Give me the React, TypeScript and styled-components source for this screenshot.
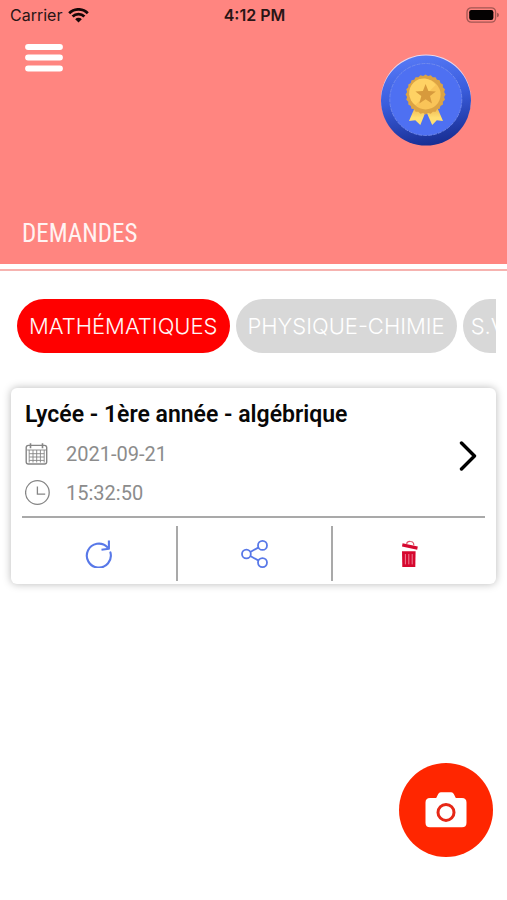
import React, { useState } from 'react';
import styled, { createGlobalStyle } from 'styled-components';

const GlobalStyle = createGlobalStyle`
  *, *::before, *::after { box-sizing: border-box; }
  body { margin: 0; background: #fff; font-family: Inter, "Liberation Sans", sans-serif; }
  button { margin: 0; padding: 0; border: 0; background: none; font: inherit; color: inherit; cursor: pointer; }
  svg { display: block; }
`;

const Screen = styled.div`
  min-height: 100vh;
  background: #fff;
`;

const Header = styled.header`
  background: #ff8580;
`;

const StatusBar = styled.div`
  display: grid;
  grid-template-columns: 1fr auto 1fr;
  align-items: center;
  height: 30px;
  padding: 0 8px 0 10px;
  font-size: 16px;
  line-height: 20px;
  color: #291515;
`;

const Carrier = styled.div`
  display: flex;
  align-items: center;
  gap: 6px;
`;

const Clock = styled.time`
  font-weight: 600;
`;

const BatterySlot = styled.div`
  display: flex;
  justify-content: flex-end;
`;

const TopBar = styled.div`
  display: flex;
  justify-content: space-between;
  align-items: flex-start;
  padding: 13px 36px 0 25px;
`;

const MedalButton = styled.button`
  margin-top: 11px;
`;

const PageTitle = styled.h1`
  margin: 0;
  padding: 72px 22px 14px;
  font-family: "Roboto Condensed", "Liberation Sans Narrow", Roboto, sans-serif;
  font-size: 25px;
  line-height: 32px;
  font-weight: 400;
  color: #fff3f2;
`;

const HeaderRule = styled.div`
  height: 7px;
  border-bottom: 2px solid #f6b3b0;
  background: #fff;
`;

const Content = styled.main`
  padding: 28px 11px 0;
`;

const Subjects = styled.nav`
  display: flex;
  gap: 6px;
  padding-left: 6px;
  overflow: hidden;
`;

const Chip = styled.button<{ $active: boolean; $compact: boolean }>`
  flex: none;
  height: 54px;
  padding: 0 ${({ $compact }) => ($compact ? 8 : 12)}px;
  border-radius: 27px;
  background: ${({ $active }) => ($active ? '#ff0000' : '#d8d8d8')};
  color: ${({ $active }) => ($active ? '#fff6f6' : '#ffffff')};
  font-size: 22px;
  font-weight: 300;
  line-height: 28px;
  white-space: nowrap;
`;

const Card = styled.article`
  margin-top: 35px;
  padding: 0 11px;
  border-radius: 6px;
  background: #fff;
  box-shadow: 0 0 9px rgba(0, 0, 0, 0.28);
`;

const Summary = styled.div`
  display: flex;
  align-items: center;
  justify-content: space-between;
  padding: 12px 8px 4px 3px;
`;

const CardTitle = styled.h2`
  margin: 0 0 4px;
  font-family: Roboto, sans-serif;
  font-size: 23px;
  line-height: 30px;
  font-weight: 600;
  color: #080808;
`;

const Detail = styled.div`
  display: grid;
  grid-template-columns: 25px auto;
  column-gap: 16px;
  align-items: center;
  height: 39px;
  font-family: Roboto, sans-serif;
  font-size: 20px;
  line-height: 26px;
  color: #8c8c8c;
`;

const Actions = styled.div`
  display: grid;
  grid-template-columns: repeat(3, 1fr);
  padding: 8px 0 3px;
  border-top: 2px solid #a9a9a9;
`;

const Action = styled.button`
  display: flex;
  align-items: center;
  justify-content: center;
  height: 55px;

  & + & {
    border-left: 2px solid #a9a9a9;
  }
`;

const CameraButton = styled.button`
  position: fixed;
  right: 14px;
  bottom: 43px;
  display: flex;
  align-items: center;
  justify-content: center;
  width: 94px;
  height: 94px;
  border-radius: 50%;
  background: #ff2600;
`;

const WifiIcon = () => (
  <svg width="21" height="15" viewBox="0 0 21 15" aria-hidden="true">
    <g fill="none" stroke="#160707" strokeWidth="2.8">
      <path d="M1.2 5.2a13.2 13.2 0 0 1 18.6 0" />
      <path d="M4.6 8.6a8.4 8.4 0 0 1 11.8 0" />
    </g>
    <path d="M7.2 11.2a4.7 4.7 0 0 1 6.6 0L10.5 14.5z" fill="#160707" />
  </svg>
);

const BatteryIcon = () => (
  <svg width="33" height="16" viewBox="0 0 33 16" role="img" aria-label="Batterie pleine">
    <rect x="1" y="0.8" width="28.6" height="14.4" rx="4.2" fill="none" stroke="#a35652" strokeWidth="1.3" />
    <rect x="3.2" y="3" width="24.2" height="10" rx="2.2" fill="#050202" />
    <path d="M31 5.8q2 .5 2 2.2t-2 2.2z" fill="#a35652" />
  </svg>
);

const MenuIcon = () => (
  <svg width="38" height="29" viewBox="0 0 38 29" aria-hidden="true">
    <path d="M3.1 4h31.8M3.1 14.6h31.8M3.1 25.4h31.8" stroke="#fff" strokeWidth="6" strokeLinecap="round" />
  </svg>
);

const sealPoints = Array.from({ length: 48 }, (_, i) => {
  const angle = (i * Math.PI) / 24;
  const radius = i % 2 ? 18.7 : 20;
  return `${(44.6 + radius * Math.cos(angle)).toFixed(2)},${(40.5 + radius * Math.sin(angle)).toFixed(2)}`;
}).join(' ');

const MedalIcon = () => (
  <svg width="90" height="92" viewBox="0 0 90 92" aria-hidden="true">
    <defs>
      <linearGradient id="rim" x1="0.4" y1="0" x2="0.6" y2="1">
        <stop offset="0" stopColor="#5578f5" />
        <stop offset="0.45" stopColor="#3b5ede" />
        <stop offset="1" stopColor="#172d91" />
      </linearGradient>
      <linearGradient id="ribbon" x1="0" y1="0" x2="0" y2="1">
        <stop offset="0" stopColor="#edb54d" />
        <stop offset="0.6" stopColor="#ffdf73" />
      </linearGradient>
    </defs>
    <circle cx="45" cy="45.4" r="45" fill="#ead9ed" />
    <circle cx="45" cy="46.6" r="45" fill="url(#rim)" />
    <circle cx="44.8" cy="45.5" r="36" fill="#4e70f2" stroke="#7991ed" strokeWidth="0.8" strokeDasharray="4 1" />
    <path d="M34 53L28 67l6.3-.8 5 4.7L45 57l6.2 13.9 4.6-4.7 6.2.8L56 53z" fill="url(#ribbon)" />
    <polygon points={sealPoints} fill="#dca344" />
    <circle cx="44.6" cy="40.5" r="15" fill="#f9c458" />
    <path d="M34.4 51.1A14.6 14.6 0 1 1 54.8 30.9z" fill="#ffd264" />
    <path d="M44.6 30l2.8 7 7.5.4-5.9 4.7 2 7.3-6.4-4.1-6.3 4.1 2-7.3-5.9-4.7 7.5-.4z" fill="#d79a3c" />
  </svg>
);

const CalendarIcon = () => (
  <svg width="24" height="22" viewBox="0 0 24 22" fill="none" stroke="#858585" aria-hidden="true">
    <rect x="1.2" y="2.4" width="20.5" height="18.6" rx="2.2" strokeWidth="1.4" />
    <path d="M5.5.3v5M17.5.3v5" strokeWidth="1.6" />
    <path d="M2.2 7h19M4.2 10.7h15M4.2 14h15M4.2 17.4h15M4.2 7v12.5M8 7v12.5M11.7 7v12.5M15.4 7v12.5M19.2 7v12.5" strokeWidth="0.9" />
  </svg>
);

const ClockIcon = () => (
  <svg width="25" height="25" viewBox="0 0 25 25" fill="none" stroke="#858585" strokeWidth="1.3" aria-hidden="true">
    <circle cx="12.4" cy="12.5" r="11.8" />
    <path d="M12.4 6.5v7.6h7.8" />
  </svg>
);

const ChevronIcon = () => (
  <svg width="18" height="30" viewBox="0 0 18 30" fill="none" aria-hidden="true">
    <path d="M2.5 2l13 13-13 13" stroke="#000" strokeWidth="3.4" strokeLinecap="round" strokeLinejoin="round" />
  </svg>
);

const ReloadIcon = () => (
  <svg width="28" height="28" viewBox="0 0 28 28" fill="none" stroke="#5878e8" strokeWidth="2.1" aria-hidden="true">
    <path d="M22.4 7.2A12 12 0 1 0 25.4 12.4" strokeLinecap="round" />
    <path d="M23.9.6v8.2l-7.4 1" strokeLinejoin="round" />
  </svg>
);

const ShareIcon = () => (
  <svg width="27" height="28" viewBox="0 0 27 28" fill="none" stroke="#5878e8" strokeWidth="1.8" aria-hidden="true">
    <circle cx="5.4" cy="14" r="4.4" />
    <circle cx="21.5" cy="5.4" r="4.5" />
    <circle cx="21.5" cy="22.6" r="4.5" />
    <path d="M9.3 12l8.3-4.6M9.3 16l8.3 4.6" />
  </svg>
);

const TrashIcon = () => (
  <svg width="18" height="28" viewBox="0 0 18 28" aria-hidden="true">
    <path d="M6.6 3.8q.6-2.6 3.8-2.3 3.5.2 3.4 3.7" fill="none" stroke="#de5368" strokeWidth="1.2" />
    <path d="M2.6 3.2l15.2 3.4-.6 3.2L2 6.4z" fill="#d6082f" />
    <path d="M2 11.3h13.6l-.3 15.6H2.3z" fill="#d6082f" />
    <path d="M5.4 14v10.4M8.8 14v10.4M12.2 14v10.4" stroke="#ee7f94" strokeWidth="1" />
  </svg>
);

const CameraIcon = () => (
  <svg width="42" height="36" viewBox="0 0 42 36" aria-hidden="true">
    <path
      d="M5 6h6.2l2-4.1Q14 .3 15.8.3h10.4q1.8 0 2.6 1.6l2 4.1H37q4.5 0 4.5 4.5v20.2q0 4.5-4.5 4.5H5Q.5 35.2.5 30.7V10.5Q.5 6 5 6z"
      fill="#fff"
    />
    <circle cx="21" cy="20.4" r="8" fill="none" stroke="#e62716" strokeWidth="3" />
  </svg>
);

const subjects = ['MATHÉMATIQUES', 'PHYSIQUE-CHIMIE', 'S.V.T'];

export default function App() {
  const [subject, setSubject] = useState(subjects[0]);

  return (
    <Screen>
      <GlobalStyle />
      <Header>
        <StatusBar>
          <Carrier>
            Carrier
            <WifiIcon />
          </Carrier>
          <Clock>4:12 PM</Clock>
          <BatterySlot>
            <BatteryIcon />
          </BatterySlot>
        </StatusBar>
        <TopBar>
          <button type="button" aria-label="Menu">
            <MenuIcon />
          </button>
          <MedalButton type="button" aria-label="Récompenses">
            <MedalIcon />
          </MedalButton>
        </TopBar>
        <PageTitle>DEMANDES</PageTitle>
        <HeaderRule />
      </Header>
      <Content>
        <Subjects aria-label="Matières">
          {subjects.map((name) => (
            <Chip
              key={name}
              type="button"
              $active={name === subject}
              $compact={name.length < 6}
              aria-pressed={name === subject}
              onClick={() => setSubject(name)}
            >
              {name}
            </Chip>
          ))}
        </Subjects>
        <Card>
          <Summary>
            <div>
              <CardTitle>Lycée - 1ère année - algébrique</CardTitle>
              <Detail>
                <CalendarIcon />
                <time>2021-09-21</time>
              </Detail>
              <Detail>
                <ClockIcon />
                <time>15:32:50</time>
              </Detail>
            </div>
            <button type="button" aria-label="Ouvrir la demande">
              <ChevronIcon />
            </button>
          </Summary>
          <Actions>
            <Action type="button" aria-label="Relancer">
              <ReloadIcon />
            </Action>
            <Action type="button" aria-label="Partager">
              <ShareIcon />
            </Action>
            <Action type="button" aria-label="Supprimer">
              <TrashIcon />
            </Action>
          </Actions>
        </Card>
      </Content>
      <CameraButton type="button" aria-label="Prendre une photo">
        <CameraIcon />
      </CameraButton>
    </Screen>
  );
}
